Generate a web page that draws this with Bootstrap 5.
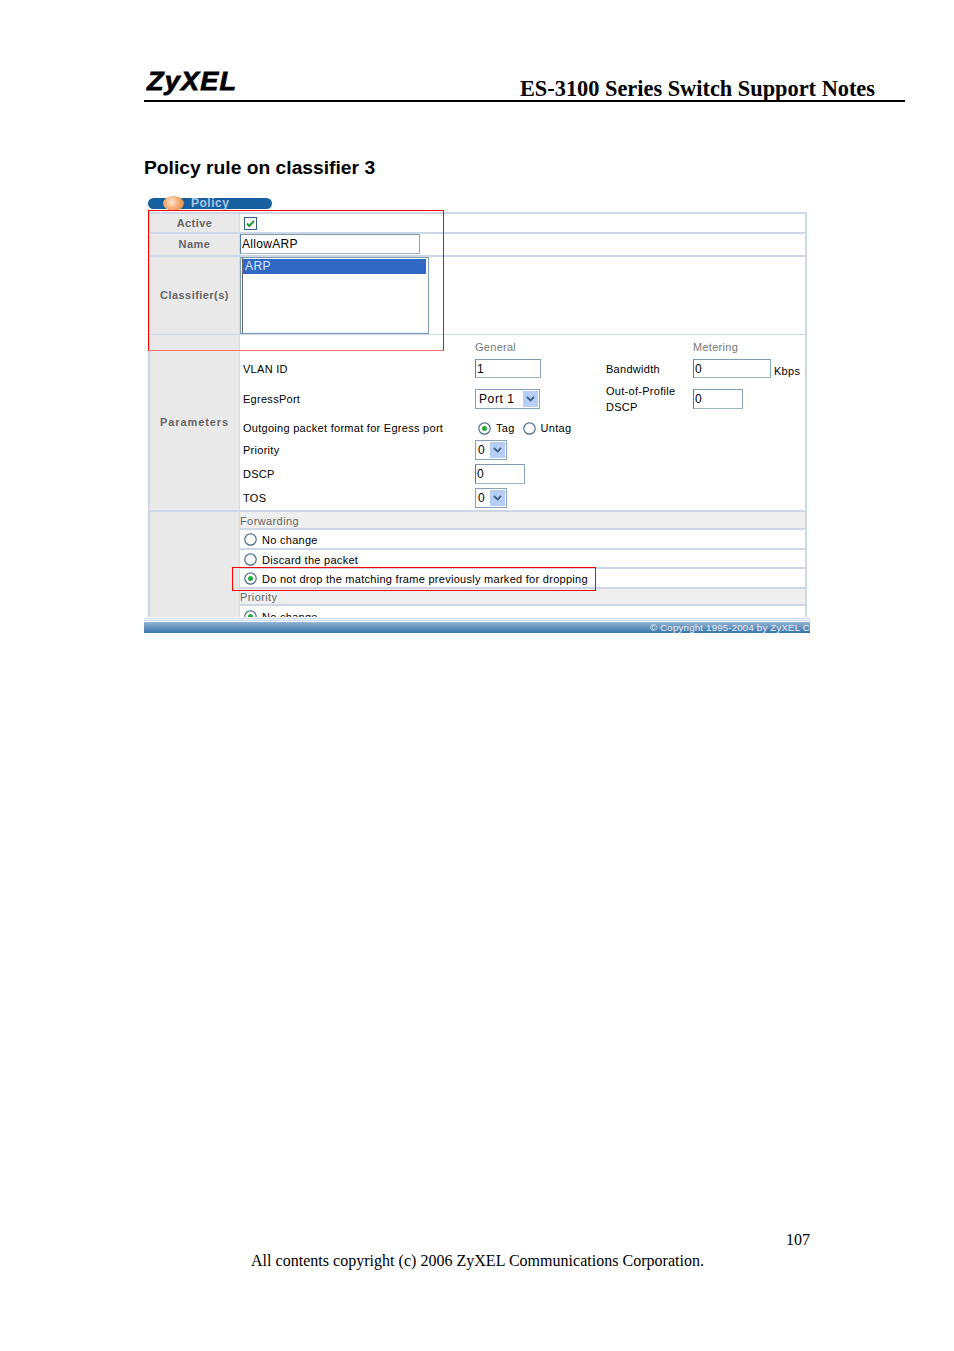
<!DOCTYPE html>
<html lang="en">
<head>
<meta charset="utf-8">
<title>ES-3100 Series Switch Support Notes</title>
<link href="https://cdn.jsdelivr.net/npm/bootstrap@5.3.0/dist/css/bootstrap.min.css" rel="stylesheet">
<style>
body{background:#fff;margin:0;font-family:"Liberation Sans",Arial,sans-serif;color:#000}
.sheet{width:954px;height:1351px;display:flex;flex-direction:column;overflow:hidden}
.doc-head{margin:0 49px 0 144px;height:102px;border-bottom:2px solid #000;display:flex;justify-content:space-between;align-items:flex-end;padding-right:30px}
.brand{font:italic 700 26px/26px "Liberation Sans",Arial,sans-serif;letter-spacing:1.2px;-webkit-text-stroke:.8px #000;margin:0 0 6px 3px;transform:scaleX(1.04);transform-origin:left}
.doc-title{font:700 22.35px/24px "Liberation Serif","Times New Roman",serif;margin-bottom:-1px}
.rule-title{font:700 19.25px/24px "Liberation Sans",Arial,sans-serif;margin:54px 0 0 144px;height:40px}
.shot{position:relative;width:666px;height:437px;margin-left:144px;font-size:11px;letter-spacing:.28px;line-height:14px}
.pill{width:124px;height:11px;margin:2px 0 3px 4px;background:#17609f;border-radius:6px;position:relative;color:#a9c6e6;font-weight:700;font-size:12px;line-height:11px;padding-left:43px;letter-spacing:.5px}
.orb{position:absolute;left:15px;top:-2px;width:21px;height:15px;border-radius:50%;background:radial-gradient(circle at 42% 40%,#ffe9d6 0,#f8b27e 40%,#e27a24 100%)}
.tbl{width:659px;height:405px;margin-left:4px;border:solid #ced7e5;border-width:2px 2px 0;overflow:hidden}
.line{display:flex;border-bottom:2px solid #ced7e5}
.line.thin{border-bottom-width:1px}
.line.last{border-bottom:0}
.side{width:90px;flex:none;background:#e9e9e9;border-right:1px solid #d5dbe6;color:#666;font-weight:700;display:flex;align-items:center;justify-content:center;padding-bottom:1px;letter-spacing:.45px}
.side.wide{letter-spacing:.9px}
.main{flex:1;min-width:0;background:#fff}
.h18{height:18px}.h21{height:21px}.h77{height:77px}.h175{height:175px}.h300{height:300px}
.field{display:block;background:#fff;border:1px solid;border-color:#7c9cb8 #8aa7c0 #9fb5c8 #4d7ea8;padding:0 1px;font-size:12px;color:#000;border-radius:0;outline:0;font-family:inherit;letter-spacing:.3px;line-height:14px}
.w180{width:180px;height:20px}.w66{width:66px;height:19px}.w78{width:78px;height:19px}.w50{width:50px;height:20px}
.lbox{width:189px;height:77px;border:1px solid #7f9db8;padding:1px 2px 0;box-shadow:inset 1px 0 #fff,inset 2px 0 #666,inset 0 -1px #e8eef5}
.lbox-sel{background:#3068c4;color:#d9e6fa;height:15px;line-height:14px;padding-left:2px;font-size:12px;letter-spacing:.4px}
.chk{display:block;margin-left:4px}
.params{display:grid;height:175px;grid-template-columns:235px 131px 87px 1fr;grid-template-rows:22px 23px 37px 22px 22px 25px 24px}
.params>div{display:flex;align-items:center;min-width:0}
.pl{padding-left:3px}
.dim{color:#777;padding-top:1px}
.tall{line-height:16px}
.drop{width:65px;height:20px;display:flex;align-items:center;justify-content:space-between;border:1px solid #84a2bd;padding:0 1px 0 3px;letter-spacing:.6px;font-size:12px}
.drop.tiny{width:32px;padding-left:2px}
.arrowbox{width:15px;height:16px;background:#b6cdf6;display:flex;align-items:center;justify-content:center}
.kbps{margin:4px 0 0 3px}
.tagset{display:flex;align-items:center;gap:5px;padding-left:3px}
.tagset span{margin-right:3px}
.blockhead{background:#efefef;color:#666;line-height:18px;height:18px;letter-spacing:.4px}
.blockhead.shorter{height:17px;line-height:17px}
.strip{border-bottom:2px solid #ced7e5}
.optrow{display:flex;align-items:center;gap:5px;padding-left:4px;height:20px}
.optrow span{margin-top:2px}
.optrow.shorter{height:19px;padding-top:2px}
.optrow.shorter span{margin-top:0}
.stripes{height:5px;background:repeating-linear-gradient(#fff 0 1px,#c9d8e8 1px 2px)}
.barline{height:11px;background:linear-gradient(#92b2d2,#3a76ab);color:#e6eef7;font-size:9.6px;line-height:12px;padding-left:506px;white-space:nowrap;overflow:hidden;letter-spacing:.22px}
.redbox{position:absolute;border:1px solid #f00;pointer-events:none}
.rb1{left:4px;top:14px;width:296px;height:141px;border-bottom-color:#ff7070}
.rb2{left:88px;top:371px;width:364px;height:24px}
.page-no{font:400 16px/18px "Liberation Serif","Times New Roman",serif;margin:598px 0 0 786px;height:21px}
.copy-line{font:400 16px/18px "Liberation Serif","Times New Roman",serif;margin-left:251px;letter-spacing:.02px}
</style>
</head>
<body>
<div class="sheet">
  <header class="doc-head">
    <div class="brand">ZyXEL</div>
    <div class="doc-title">ES-3100 Series Switch Support Notes</div>
  </header>
  <h1 class="rule-title">Policy rule on classifier 3</h1>

  <div class="shot">
    <div class="pill"><span class="orb"></span>Policy</div>
    <div class="tbl">
      <div class="line"><div class="side h18">Active</div><div class="main h18 d-flex align-items-center">
        <svg class="chk" width="13" height="13" viewBox="0 0 13 13"><rect x=".5" y=".5" width="12" height="12" fill="#fff" stroke="#2f5f8a"/><path d="M3 6.5 5.3 9 10 3.8" fill="none" stroke="#1f9a35" stroke-width="2"/></svg>
      </div></div>
      <div class="line"><div class="side h21">Name</div><div class="main h21">
        <input class="field w180" type="text" value="AllowARP" aria-label="Name">
      </div></div>
      <div class="line thin"><div class="side h77">Classifier(s)</div><div class="main h77">
        <div class="lbox"><div class="lbox-sel">ARP</div></div>
      </div></div>
      <div class="line"><div class="side wide h175">Parameters</div><div class="main h175">
        <div class="params">
          <div></div><div class="dim">General</div><div></div><div class="dim">Metering</div>

          <div class="pl">VLAN ID</div>
          <div><input class="field w66" type="text" value="1" aria-label="VLAN ID"></div>
          <div>Bandwidth</div>
          <div><input class="field w78" type="text" value="0" aria-label="Bandwidth"><span class="kbps">Kbps</span></div>

          <div class="pl">EgressPort</div>
          <div><div class="drop">Port 1 <span class="arrowbox"><svg width="9" height="6" viewBox="0 0 9 6"><path d="M1 1 4.5 4.5 8 1" fill="none" stroke="#3f5f86" stroke-width="1.8"/></svg></span></div></div>
          <div class="tall">Out-of-Profile<br>DSCP</div>
          <div><input class="field w50" type="text" value="0" aria-label="Out-of-Profile DSCP"></div>

          <div class="pl">Outgoing packet format for Egress port</div>
          <div><div class="tagset">
            <svg width="13" height="13" viewBox="0 0 13 13"><circle cx="6.5" cy="6.5" r="5.7" fill="#fff" stroke="#4d7291" stroke-width="1.2"/><circle cx="6.5" cy="6.5" r="2.5" fill="#22a83d"/></svg><span>Tag</span>
            <svg width="13" height="13" viewBox="0 0 13 13"><circle cx="6.5" cy="6.5" r="5.7" fill="#fff" stroke="#4d7291" stroke-width="1.2"/></svg><span>Untag</span>
          </div></div><div></div><div></div>

          <div class="pl">Priority</div>
          <div><div class="drop tiny">0<span class="arrowbox"><svg width="9" height="6" viewBox="0 0 9 6"><path d="M1 1 4.5 4.5 8 1" fill="none" stroke="#3f5f86" stroke-width="1.8"/></svg></span></div></div><div></div><div></div>

          <div class="pl">DSCP</div>
          <div><input class="field w50" type="text" value="0" aria-label="DSCP"></div><div></div><div></div>

          <div class="pl">TOS</div>
          <div><div class="drop tiny">0<span class="arrowbox"><svg width="9" height="6" viewBox="0 0 9 6"><path d="M1 1 4.5 4.5 8 1" fill="none" stroke="#3f5f86" stroke-width="1.8"/></svg></span></div></div><div></div><div></div>
        </div>
      </div></div>
      <div class="line last"><div class="side h300"></div><div class="main h300">
        <div class="blockhead strip">Forwarding</div>
        <div class="optrow strip"><svg width="13" height="13" viewBox="0 0 13 13"><circle cx="6.5" cy="6.5" r="5.7" fill="#fff" stroke="#4d7291" stroke-width="1.2"/></svg><span>No change</span></div>
        <div class="optrow strip shorter"><svg width="13" height="13" viewBox="0 0 13 13"><circle cx="6.5" cy="6.5" r="5.7" fill="#fff" stroke="#4d7291" stroke-width="1.2"/></svg><span>Discard the packet</span></div>
        <div class="optrow strip"><svg width="13" height="13" viewBox="0 0 13 13"><circle cx="6.5" cy="6.5" r="5.7" fill="#fff" stroke="#4d7291" stroke-width="1.2"/><circle cx="6.5" cy="6.5" r="2.5" fill="#22a83d"/></svg><span>Do not drop the matching frame previously marked for dropping</span></div>
        <div class="blockhead shorter strip">Priority</div>
        <div class="optrow"><svg width="13" height="13" viewBox="0 0 13 13"><circle cx="6.5" cy="6.5" r="5.7" fill="#fff" stroke="#4d7291" stroke-width="1.2"/><circle cx="6.5" cy="6.5" r="2.5" fill="#22a83d"/></svg><span>No change</span></div>
      </div></div>
    </div>
    <div class="stripes"></div>
    <div class="barline">© Copyright 1995-2004 by ZyXEL C</div>
    <div class="redbox rb1"></div>
    <div class="redbox rb2"></div>
  </div>

  <div class="page-no">107</div>
  <div class="copy-line">All contents copyright (c) 2006 ZyXEL Communications Corporation.</div>
</div>
</body>
</html>
